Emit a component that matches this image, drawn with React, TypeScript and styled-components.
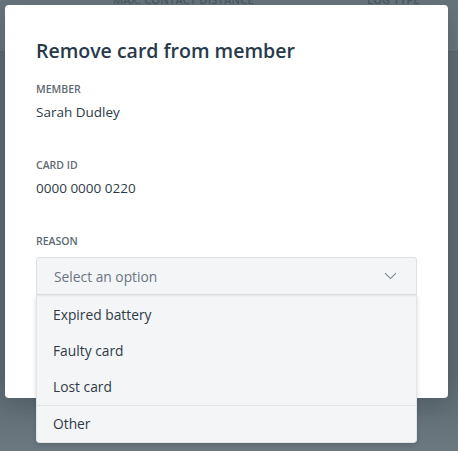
import styled, { createGlobalStyle } from "styled-components";

const GlobalStyle = createGlobalStyle`
  html, body {
    margin: 0;
    padding: 0;
    background: #66737b;
  }
  body {
    font-family: "Open Sans", "Liberation Sans", sans-serif;
    -webkit-font-smoothing: antialiased;
  }
`;

const reasons = ["Expired battery", "Faulty card", "Lost card"];

export default function App() {
  return (
    <Page>
      <GlobalStyle />
      <Backdrop>
        <TableHead>
          <HeadCell $width="254px">Max. contact distance</HeadCell>
          <HeadCell>Log type</HeadCell>
        </TableHead>
        <TableBody />
      </Backdrop>

      <Modal>
        <Title>Remove card from member</Title>

        <Field>
          <Label>Member</Label>
          <Value>Sarah Dudley</Value>
        </Field>

        <Field>
          <Label>Card ID</Label>
          <Value>0000 0000 0220</Value>
        </Field>

        <Field>
          <Label>Reason</Label>
          <SelectWrap>
            <Select>
              <Placeholder>Select an option</Placeholder>
              <svg width="13" height="8" viewBox="0 0 13 8" fill="none">
                <path d="M1 1.2 L6.5 6.6 L12 1.2" stroke="#7c868e" strokeWidth="1.1" />
              </svg>
            </Select>
            <Menu>
              {reasons.map((r) => (
                <Option key={r}>{r}</Option>
              ))}
              <Option $divided>Other</Option>
            </Menu>
          </SelectWrap>
        </Field>
      </Modal>
    </Page>
  );
}

const Page = styled.div`
  position: relative;
  width: 458px;
  height: 451px;
  overflow: hidden;
`;

const Backdrop = styled.div`
  display: flex;
  flex-direction: column;
  height: 100%;
`;

const TableHead = styled.div`
  display: flex;
  height: 52px;
  padding: 0 0 0 113px;
  background: #68747c;
  border-bottom: 1px solid #5a666e;
  box-sizing: border-box;
`;

const HeadCell = styled.div<{ $width?: string }>`
  width: ${(p) => p.$width || "auto"};
  margin-top: -6px;
  font-size: 11px;
  line-height: 12px;
  font-weight: 600;
  letter-spacing: 0.2px;
  text-transform: uppercase;
  color: #4d5961;
`;

const TableBody = styled.div`
  flex: 1;
  background: linear-gradient(#5d6a72 0%, #5d6a72 80%, #6b7880 100%);
`;

const Modal = styled.div`
  position: absolute;
  left: 5px;
  top: 5px;
  width: 443px;
  height: 393px;
  box-sizing: border-box;
  padding: 32px 31px 0 31px;
  background: #ffffff;
  border-radius: 4px;
  box-shadow: 0 8px 24px rgba(30, 40, 48, 0.25);
`;

const Title = styled.h2`
  margin: 0 0 16px;
  font-size: 19.5px;
  line-height: 28px;
  font-weight: 600;
  color: #27394a;
`;

const Field = styled.div`
  display: flex;
  flex-direction: column;
  gap: 5px;
  margin-bottom: 35px;

  &:last-child {
    margin-bottom: 0;
    gap: 8px;
  }
`;

const Label = styled.div`
  font-size: 10.5px;
  line-height: 16px;
  font-weight: 600;
  text-transform: uppercase;
  color: #5d6972;
`;

const Value = styled.div`
  font-size: 13.5px;
  line-height: 20px;
  color: #2e3b46;
`;

const SelectWrap = styled.div`
  position: relative;
  width: 381px;
`;

const Select = styled.div`
  display: flex;
  align-items: center;
  justify-content: space-between;
  height: 38px;
  box-sizing: border-box;
  padding: 0 19px 0 17px;
  background: #f4f5f7;
  border: 1px solid #dde0e4;
  border-radius: 3px 3px 0 0;
`;

const Placeholder = styled.span`
  font-size: 13.8px;
  color: #6b7680;
`;

const Menu = styled.div`
  position: absolute;
  left: 0;
  right: 0;
  top: 38px;
  padding-top: 2px;
  background: #f4f5f7;
  border: 1px solid #e3e6e9;
  border-top: none;
  border-radius: 0 0 4px 4px;
  box-shadow: 0 2px 4px rgba(30, 40, 48, 0.18), inset 0 2px 2px -1px rgba(30, 40, 48, 0.08);
`;

const Option = styled.div<{ $divided?: boolean }>`
  height: 36px;
  line-height: 36px;
  padding-left: 16px;
  font-size: 13.8px;
  color: #2e3b46;
  border-top: ${(p) => (p.$divided ? "1px solid #dfe2e6" : "none")};
`;
